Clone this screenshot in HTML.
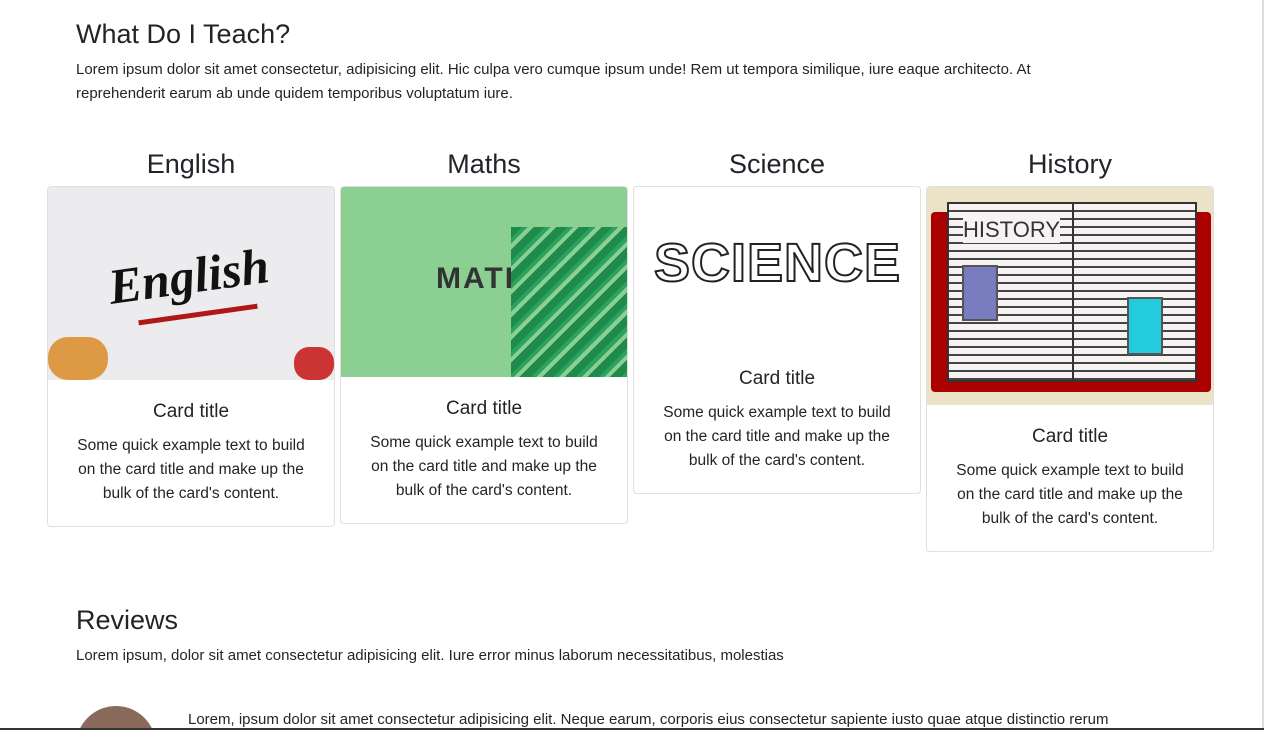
<!DOCTYPE html>
<html><head><meta charset="utf-8"><style>
*{box-sizing:border-box;margin:0;padding:0}
html,body{width:1264px;height:730px;overflow:hidden;background:#fff}
body{font-family:"Liberation Sans",sans-serif;color:#212529;position:relative;font-size:15px;line-height:24px}
.rb{position:absolute;right:0;top:0;width:2px;height:730px;background:#ddd}
.bb{position:absolute;left:0;bottom:0;width:1264px;height:2px;background:#333}
h2{font-size:27px;font-weight:500;line-height:32px;position:absolute;left:76px}
p.t{position:absolute;left:76px;width:1110px}
.col{position:absolute;top:146px;width:288px;text-align:center}
.col h3{font-size:27px;font-weight:500;line-height:36px;margin-bottom:4px}
.card{border:1px solid #dfdfdf;border-radius:4px;overflow:hidden;background:#fff}
.img{width:100%}
.cb{padding:20px 24px 20px}
.cb h5{font-size:19px;font-weight:500;line-height:24px;margin-bottom:10px}
.cb p{font-size:15.5px;line-height:24px}
</style></head><body>
<h2 style="top:18px">What Do I Teach?</h2>
<p class="t" style="top:58px">Lorem ipsum dolor sit amet consectetur, adipisicing elit. Hic culpa vero cumque ipsum unde! Rem ut tempora similique, iure eaque architecto. At<br>reprehenderit earum ab unde quidem temporibus voluptatum iure.</p>

<div class="col" style="left:47px"><h3>English</h3><div class="card">
<div class="img" style="height:193px;background:#ececef;position:relative">
<div style="position:absolute;left:60px;top:60px;font:italic bold 50px 'Liberation Serif',serif;color:#111;transform:rotate(-8deg)">English</div>
<div style="position:absolute;left:90px;top:125px;width:120px;height:5px;background:#b01818;transform:rotate(-8deg)"></div>
<div style="position:absolute;left:0;top:150px;width:60px;height:43px;background:#d94;border-radius:20px"></div>
<div style="position:absolute;right:0;top:160px;width:40px;height:33px;background:#c33;border-radius:15px"></div>
</div>
<div class="cb"><h5>Card title</h5><p>Some quick example text to build on the card title and make up the bulk of the card's content.</p></div></div></div>

<div class="col" style="left:340px"><h3>Maths</h3><div class="card">
<div class="img" style="height:190px;background:#8ccf92;position:relative">
<div style="position:absolute;left:95px;top:75px;font:bold 30px 'Liberation Sans';color:#333;letter-spacing:2px">MATH</div>
<div style="position:absolute;left:170px;top:40px;width:140px;height:150px;background:repeating-linear-gradient(135deg,#1e8a4c 0 8px,#2aa35e 8px 12px,#8ccf92 12px 16px)"></div>
</div>
<div class="cb"><h5>Card title</h5><p>Some quick example text to build on the card title and make up the bulk of the card's content.</p></div></div></div>

<div class="col" style="left:633px"><h3>Science</h3><div class="card">
<div class="img" style="height:160px;background:#fff;position:relative">
<div style="position:absolute;left:20px;top:45px;font:bold 54px 'Liberation Sans';color:#fff;-webkit-text-stroke:2px #222;letter-spacing:1px">SCIENCE</div>
</div>
<div class="cb"><h5>Card title</h5><p>Some quick example text to build on the card title and make up the bulk of the card's content.</p></div></div></div>

<div class="col" style="left:926px"><h3>History</h3><div class="card">
<div class="img" style="height:218px;background:#ece2c8;position:relative">
<div style="position:absolute;left:4px;top:25px;width:280px;height:180px;background:#a00;border-radius:4px"></div>
<div style="position:absolute;left:20px;top:15px;width:250px;height:180px;background:#f8f3f3;border:2px solid #333;background-image:repeating-linear-gradient(180deg,#f8f3f3 0 6px,#444 6px 8px)"></div>
<div style="position:absolute;left:145px;top:15px;width:2px;height:180px;background:#333"></div>
<div style="position:absolute;left:35px;top:78px;width:36px;height:56px;background:#7a7cc0;border:2px solid #555"></div>
<div style="position:absolute;left:200px;top:110px;width:36px;height:58px;background:#2cd;border:2px solid #555"></div>
<div style="position:absolute;left:36px;top:30px;font:22px 'Liberation Sans';color:#333;background:#f8f3f3">HISTORY</div>
</div>
<div class="cb"><h5>Card title</h5><p>Some quick example text to build on the card title and make up the bulk of the card's content.</p></div></div></div>

<h2 style="top:604px">Reviews</h2>
<p class="t" style="top:644px">Lorem ipsum, dolor sit amet consectetur adipisicing elit. Iure error minus laborum necessitatibus, molestias</p>
<div style="position:absolute;left:76px;top:706px;width:80px;height:80px;border-radius:50%;background:#8a6a5a"></div>
<p class="t" style="left:188px;top:708px;width:1000px;white-space:nowrap">Lorem, ipsum dolor sit amet consectetur adipisicing elit. Neque earum, corporis eius consectetur sapiente iusto quae atque distinctio rerum</p>
<div class="rb"></div><div class="bb"></div>
</body></html>
